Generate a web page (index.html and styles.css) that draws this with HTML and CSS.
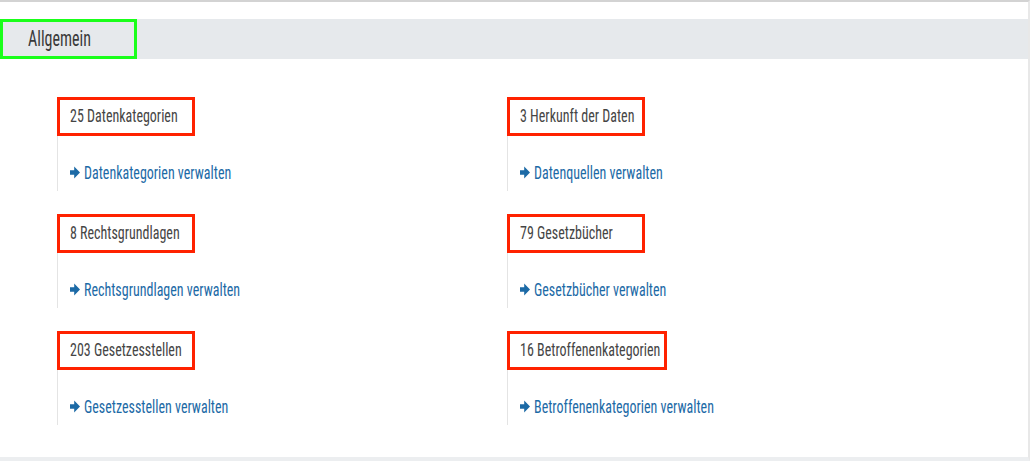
FILE: index.html
```html
<!DOCTYPE html>
<html lang="de">
<head>
<meta charset="utf-8">
<title>Allgemein</title>
<link rel="stylesheet" href="styles.css">
</head>
<body>
<div class="page">
  <div class="section-header">
    <div class="tab"><span class="t">Allgemein</span></div>
  </div>
  <div class="grid">
    <div class="item">
      <div class="count"><span class="t">25 Datenkategorien</span></div>
      <a class="link" href="#"><svg class="arrow" viewBox="0 0 10 13"><path d="M0 4.3h4.2V0.4l5.8 6.1-5.8 6.1V8.7H0z"/></svg><span class="t">Datenkategorien verwalten</span></a>
    </div>
    <div class="item">
      <div class="count"><span class="t">3 Herkunft der Daten</span></div>
      <a class="link" href="#"><svg class="arrow" viewBox="0 0 10 13"><path d="M0 4.3h4.2V0.4l5.8 6.1-5.8 6.1V8.7H0z"/></svg><span class="t">Datenquellen verwalten</span></a>
    </div>
    <div class="item">
      <div class="count"><span class="t">8 Rechtsgrundlagen</span></div>
      <a class="link" href="#"><svg class="arrow" viewBox="0 0 10 13"><path d="M0 4.3h4.2V0.4l5.8 6.1-5.8 6.1V8.7H0z"/></svg><span class="t">Rechtsgrundlagen verwalten</span></a>
    </div>
    <div class="item">
      <div class="count"><span class="t">79 Gesetzbücher</span></div>
      <a class="link" href="#"><svg class="arrow" viewBox="0 0 10 13"><path d="M0 4.3h4.2V0.4l5.8 6.1-5.8 6.1V8.7H0z"/></svg><span class="t">Gesetzbücher verwalten</span></a>
    </div>
    <div class="item">
      <div class="count"><span class="t">203 Gesetzesstellen</span></div>
      <a class="link" href="#"><svg class="arrow" viewBox="0 0 10 13"><path d="M0 4.3h4.2V0.4l5.8 6.1-5.8 6.1V8.7H0z"/></svg><span class="t">Gesetzesstellen verwalten</span></a>
    </div>
    <div class="item">
      <div class="count"><span class="t">16 Betroffenenkategorien</span></div>
      <a class="link" href="#"><svg class="arrow" viewBox="0 0 10 13"><path d="M0 4.3h4.2V0.4l5.8 6.1-5.8 6.1V8.7H0z"/></svg><span class="t">Betroffenenkategorien verwalten</span></a>
    </div>
  </div>
</div>
</body>
</html>
```
FILE: styles.css
```css
html, body {
  margin: 0;
  padding: 0;
  background: #ffffff;
}
body {
  font-family: Roboto, "Liberation Sans", sans-serif;
  font-stretch: 75%;
  color: #444444;
}
.t {
  display: inline-block;
  transform: scaleY(1.33);
}
.page {
  box-sizing: border-box;
  height: 100vh;
  border-top: 2px solid #d3d3d3;
  border-right: 2px solid #e8e8e8;
  border-bottom: 4px solid #eceef0;
}
.section-header {
  margin-top: 17px;
  height: 40px;
  background: #e6e9ec;
}
.tab {
  box-sizing: border-box;
  width: 137px;
  height: 40px;
  border: 3px solid #1aff1a;
  padding-left: 25px;
  font-size: 16px;
  line-height: 34px;
  color: #3a3a3a;
}
.grid {
  display: grid;
  grid-template-columns: 450px 1fr;
  row-gap: 23px;
  padding: 38px 0 0 57px;
}
.item {
  height: 94px;
  border-left: 1px solid #e4e4e4;
}
.count {
  display: inline-block;
  box-sizing: border-box;
  min-width: 138px;
  height: 39px;
  margin-left: -1px;
  padding: 0 4px 0 10px;
  border: 3px solid #ff2200;
  font-size: 14px;
  line-height: 33px;
  color: #454545;
}
.link {
  display: flex;
  align-items: center;
  gap: 4px;
  margin: 26px 0 0 12px;
  font-size: 14px;
  line-height: 20px;
  color: #1c6aa6;
  text-decoration: none;
}
.arrow {
  width: 10px;
  height: 13px;
  fill: #1c6aa6;
}
```
